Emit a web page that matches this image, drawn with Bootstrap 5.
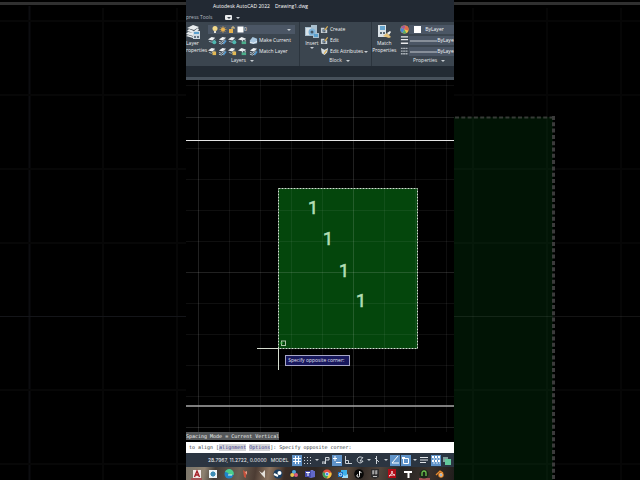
<!DOCTYPE html>
<html lang="en">
<head>
<meta charset="utf-8">
<meta name="viewport" content="width=device-width, initial-scale=1">
<title>Autodesk AutoCAD 2022 - Drawing1.dwg</title>
<link href="https://cdn.jsdelivr.net/npm/bootstrap@5.3.0/dist/css/bootstrap.min.css" rel="stylesheet">
<style>
body{background:#000;font:5px/8px "Open Sans",sans-serif;color:#f0f2f4}
.stage{display:grid;grid-template-columns:minmax(0,186fr) minmax(0,268fr) minmax(0,186fr);grid-template-rows:minmax(0,1fr)}
.backdrop,.drawing svg{display:block;width:100%;height:100%}
button,select{font:inherit;color:inherit;background:none;border:0;padding:0;margin:0}
.app{background:#222933}
.titlebar{height:13px;padding:2px 0 0 27px;gap:5px;line-height:8px;color:#fff}
.tabs{height:9px;color:#b4bac1;gap:13px}
.tabs button{line-height:9px}
.pill{width:7px;height:5px;background:#e8eaec;border-radius:1px}
.ribbon{height:44px;background:#3b454f}
.panel{border-right:1px solid #2c353e;min-width:0}
.panel-layers{flex:0 0 42.5%}
.panel-block{flex:0 0 27%}
.panel-body{height:34px;padding-top:2px}
.panel-name{height:9px;line-height:9px;color:#e2e6ea}
.panel-block .panel-name{padding-left:8px}
.panel-props .panel-name{padding-left:32px}
.big{width:16px;flex:none;display:flex;flex-direction:column;align-items:center;line-height:7px;white-space:nowrap}
.big svg{width:15px;height:15px;flex:none;margin-bottom:1px}
.big-start{width:22px;align-items:flex-start}
.line{height:11px;display:flex;align-items:center;white-space:nowrap}
.line button{display:flex;align-items:center;gap:1px;line-height:9px}
.tools-line{gap:2px}
.tools-line span{gap:1px}
.i9{width:9px;height:9px;flex:none}
.field{height:9px;background:#4b5665;min-width:0;line-height:9px}
.field select{appearance:none;line-height:9px;min-width:0;color:#f4f5f6}
.dn{display:inline-block;border:2px solid transparent;border-top-color:#c8cdd2;border-bottom:0;flex:none}
.pill .dn{border-top-color:#39424c}
.shelf{height:14px;background:#232b34;border-bottom:3px solid #47515b}
.drawing{background:#000;min-height:0}
.hint{position:absolute;left:37%;top:78%;width:65px;height:11px;border:1px solid #a6a6c4;background:#17175c;color:#e2e2f2;line-height:9px;padding-left:2px;white-space:nowrap}
.mono{font:5px/8px "DejaVu Sans Mono",monospace;white-space:pre}
.history{height:10px;background:#000}
.history span{background:#55585a;color:#f0f0f0;display:inline-block}
.prompt{height:11px;background:#fff;color:#33373b;line-height:11px;padding-left:3px}
.prompt button{background:#d5d6d9;color:#35358a;line-height:7px}
.status{height:14px;background:#2b3541;font:5px/14px Inter,sans-serif;color:#f0f2f4;padding-left:22px}
.status .tools{display:flex;align-items:center;justify-content:space-between;flex:1 1 0;min-width:0;padding:0 2px 0 3px}
.status .tools button{width:10px;height:11px;display:flex;align-items:center;justify-content:center}
.status .tools .more{width:5px}
.status .tools .lit{background:#5f93c9}
.taskbar{height:13px;padding:0 8px 0 5px;background:linear-gradient(100deg,#7a756a 0,#8d8170 7%,#423c37 11%,#6d6154 20%,#4c3c33 26%,#8c7460 31%,#3b2d26 37%,#2e2722 48%,#57483b 60%,#332b27 65%,#51453c 72%,#262423 80%,#3c332d 90%,#201d1c)}
.taskbar button{width:11px;height:13px;display:flex;align-items:center;justify-content:center}
.taskbar .on{box-shadow:inset 0 -2px #a25254}
.taskbar svg{width:10px;height:10px}
</style>
<script src="https://cdn.jsdelivr.net/npm/bootstrap@5.3.0/dist/js/bootstrap.bundle.min.js"></script>
</head>
<body>
<svg class="d-none" aria-hidden="true">
 <symbol id="lay1" viewBox="0 0 10 10"><path d="M0 4l4-3 4 1-3 3z" fill="#eef1f3"/><path d="M1 6l4 1 3-3" fill="none" stroke="#9fb2bf"/><circle cx="7" cy="7" r="2.2" fill="#4fb8b0"/></symbol>
 <symbol id="lay2" viewBox="0 0 10 10"><path d="M1 4l4-3 4 1-4 3z" fill="#eef1f3"/><path d="M1 6l3 1 4-3M1 8l3 1 4-3" fill="none" stroke="#c3d1da"/><path d="M6 9l3-4" stroke="#4d98d1" stroke-width="1.5"/></symbol>
 <symbol id="lay3" viewBox="0 0 10 10"><path d="M0 4l4-3 4 1-3 3z" fill="#eef1f3"/><path d="M1 6l3 1 4-3" fill="none" stroke="#9fb2bf"/><path d="M5 5h4v4H5z" fill="#e2b956"/></symbol>
 <symbol id="lay4" viewBox="0 0 10 10"><path d="M0 4l4-3 5 2-4 2z" fill="#eef1f3"/><path d="M4 6h5v3H4z" fill="#4cae8b"/><path d="M5 6V4h3v2" fill="none" stroke="#d4dde2"/></symbol>
 <symbol id="block" viewBox="0 0 10 10"><path d="M1 3h4v2H3v4H1zM3 8h5v1H3zM6 5h2v4H6z" fill="#c9d1d7"/><circle cx="4" cy="6" r="1.5" fill="#75899a"/><path d="M5 5l3-4 1 1-3 4z" fill="#ddb35b"/></symbol>
</svg>
<main class="stage vh-100 overflow-hidden">
 <svg class="backdrop" viewBox="0 0 186 480" preserveAspectRatio="xMidYMid slice" aria-hidden="true">
  <path d="M0 3.500H186" stroke="#303030" stroke-width="3"/>
  <path d="M29.500 6V480" stroke="#0c0d10" stroke-width="2"/>
  <path d="M103 8V480M177 8V480M0 21H186M0 95H186M0 169H186M0 243H186M0 390H186M0 464H186" stroke="#070707" stroke-width="2"/>
  <path d="M0 316.500H186" stroke="#141519"/>
 </svg>
 <div class="app d-flex flex-column overflow-hidden">
  <header class="titlebar d-flex"><span>Autodesk AutoCAD 2022</span><span>Drawing1.dwg</span></header>
  <nav class="tabs d-flex align-items-center" aria-label="Ribbon tabs">
   <button type="button">press Tools</button>
   <button type="button" class="d-flex align-items-center gap-1" aria-label="Ribbon display"><span class="pill d-flex align-items-center justify-content-center"><i class="dn"></i></span><i class="dn"></i></button>
  </nav>
  <section class="ribbon d-flex flex-shrink-0 overflow-hidden">
   <div class="panel panel-layers">
    <div class="panel-body d-flex">
     <button type="button" class="big big-start"><svg viewBox="0 0 15 15"><path d="M1 4l6-3 6 2-5 3zM1 7l7 2 5-3-1-2-4 3-5-2zM0 10l7 2 2-1V9L2 8zM0 12l7 2 1-1-6-2z" fill="#e9edef"/><path d="M7 7h7v8H7z" fill="#cfdae2"/><path d="M8 8h5v2H8z" fill="#5ba0cd"/><path d="M8 12h2v2H8zM11 12h2v2h-2z" fill="#657482"/></svg><span>Layer</span><span>roperties</span></button>
     <div class="flex-fill">
      <div class="line"><div class="field d-flex align-items-center flex-fill ps-1 pe-1 me-1">
        <svg viewBox="0 0 32 9" width="32" height="9"><circle cx="3" cy="3.500" r="2.500" fill="#f3d98a"/><path d="M2 6h2v2H2z" fill="#e0e0d8"/><circle cx="11" cy="4.500" r="2" fill="#e9b453"/><path d="M11 1v7M7.500 4.500h7M8.500 2l5 5M13.500 2l-5 5" stroke="#e9b453" stroke-width=".6"/><path d="M17 4h4v4h-4z" fill="#e6b24c"/><path d="M20 4V2h2v2" fill="none" stroke="#e9cb87"/><path d="M25.500 1.500h6v6h-6z" fill="#fff"/></svg>
        <select class="flex-fill" aria-label="Current layer"><option>0</option></select><i class="dn"></i></div></div>
      <div class="line tools-line"><span class="d-flex"><svg class="i9"><use href="#lay1"/></svg><svg class="i9"><use href="#lay2"/></svg><svg class="i9"><use href="#lay1"/></svg><svg class="i9"><use href="#lay4"/></svg></span><button type="button"><svg class="i9" viewBox="0 0 10 10"><path d="M1 5l3-4 5 2v5l-4 1-4-1z" fill="#a9c7df"/><path d="M1 7l4 1 4-2" fill="none" stroke="#eef1f3"/></svg>Make Current</button></div>
      <div class="line tools-line"><span class="d-flex"><svg class="i9"><use href="#lay3"/></svg><svg class="i9"><use href="#lay2"/></svg><svg class="i9"><use href="#lay3"/></svg><svg class="i9"><use href="#lay4"/></svg></span><button type="button"><svg class="i9"><use href="#lay2"/></svg>Match Layer</button></div>
     </div>
    </div>
    <div class="panel-name d-flex align-items-center justify-content-center gap-1"><span>Layers</span><i class="dn"></i></div>
   </div>
   <div class="panel panel-block">
    <div class="panel-body d-flex">
     <button type="button" class="big ms-1"><svg viewBox="0 0 15 15"><path d="M1 3h6V1h6v8h2v5H9v-2H1z" fill="#a9bfce"/><path d="M2 4h5v7H2z" fill="#d8e2e8"/><circle cx="8" cy="8" r="3.500" fill="#7fb4da"/><circle cx="8" cy="8" r="1.500" fill="#435767"/><path d="M10 10h4v3h-4z" fill="#5ba0cd"/></svg><span>Insert</span><i class="dn"></i></button>
     <div>
      <div class="line"><button type="button"><svg class="i9"><use href="#block"/></svg>Create</button></div>
      <div class="line"><button type="button"><svg class="i9"><use href="#block"/></svg>Edit</button></div>
      <div class="line"><button type="button"><svg class="i9" viewBox="0 0 10 10"><path d="M1 1l4 2 4-2-1 5-3 3-3-2z" fill="#d6dde1"/><path d="M4 7l3-4 1 1-3 4z" fill="#ddb35b"/></svg>Edit Attributes<i class="dn"></i></button></div>
     </div>
    </div>
    <div class="panel-name d-flex align-items-center justify-content-center gap-1"><span>Block</span><i class="dn"></i></div>
   </div>
   <div class="panel panel-props flex-fill border-0">
    <div class="panel-body d-flex">
     <button type="button" class="big ms-1 me-2"><svg viewBox="0 0 15 15"><path d="M1 1h8v12H1z" fill="#dbe3e8"/><path d="M3 2h5v4H3z" fill="#66a5cf"/><path d="M3 8h2v2H3zM6 8h2v2H6z" fill="#5c6c79"/><path d="M6 12l4-3 4 4-2 1z" fill="#e3c17a"/><path d="M10 9l3-2 1 1-2 3z" fill="#f0f0ec"/></svg><span>Match</span><span>Properties</span></button>
     <div class="flex-fill">
      <div class="line"><svg class="i9" viewBox="0 0 10 10"><circle cx="5" cy="5" r="4.500" fill="#eec54b"/><path d="M5 5L1 3A4.500 4.500 0 0 1 6 .6z" fill="#a6599c"/><path d="M5 5L6 .6A4.500 4.500 0 0 1 9.400 6z" fill="#e26c4a"/><path d="M5 5L1 3A4.500 4.500 0 0 0 3 9z" fill="#4c86cf"/><path d="M5 5L3 9a4.500 4.500 0 0 0 4 0z" fill="#53b06b"/></svg>
       <div class="field d-flex align-items-center flex-fill ps-1 gap-1"><svg width="8" height="8" viewBox="0 0 8 8"><path d="M1 0h7v7H1z" fill="#fff"/></svg><select aria-label="Object color"><option>ByLayer</option></select></div></div>
      <div class="line"><svg class="i9" viewBox="0 0 10 10"><path d="M1 1h8M1 4h8M1 8h8" stroke="#e8eaec" stroke-width="1.500"/></svg>
       <div class="field d-flex align-items-center flex-fill"><svg class="flex-shrink-0" width="28" height="9"><path d="M1 5H28" stroke="#e2e6ea" stroke-width=".8"/></svg><select aria-label="Lineweight"><option>ByLaye</option></select></div></div>
      <div class="line"><svg class="i9" viewBox="0 0 10 10"><path d="M1 1.500h8M1 4.500h8M1 7.500h8" stroke="#aeb5bb" stroke-width="1.500" stroke-dasharray="2 .5"/></svg>
       <div class="field d-flex align-items-center flex-fill"><svg class="flex-shrink-0" width="28" height="9"><path d="M1 5H28" stroke="#e2e6ea" stroke-width=".8"/></svg><select aria-label="Linetype"><option>ByLaye</option></select></div></div>
     </div>
    </div>
    <div class="panel-name d-flex align-items-center justify-content-center gap-1"><span>Properties</span><i class="dn"></i></div>
   </div>
  </section>
  <div class="shelf flex-shrink-0"></div>
  <section class="drawing flex-fill position-relative overflow-hidden" aria-label="Drawing area">
   <svg viewBox="186 80 268 352" preserveAspectRatio="xMidYMid slice">
    <rect x="278.500" y="188.500" width="139" height="160" fill="#04460c"/>
    <path d="M229.500 80V432M260.500 80V432M291.500 80V432M322.500 80V432M384.500 80V432M415.500 80V432M446.500 80V432M186 85.500H454M186 148.500H454M186 179.500H454M186 210.500H454M186 241.500H454M186 303.500H454M186 334.500H454M186 365.500H454M186 396.500H454" stroke="#fff" stroke-opacity=".06"/>
    <path d="M198.500 80V432M353.500 80V432M186 117.500H454M186 272.500H454M186 427.500H454" stroke="#fff" stroke-opacity=".13"/>
    <path d="M186 140.500H454" stroke="#e4e4e4"/><path d="M186 406H454" stroke="#a8a8a8" stroke-width="1.500"/>
    <rect x="278.500" y="188.500" width="139" height="160" fill="none" stroke="#d3e0d3" stroke-dasharray="2 1"/>
    <g font-family="Roboto, sans-serif" font-size="18" fill="#b5dcb5" stroke="#b5dcb5" stroke-width=".6"><text x="308" y="214">1</text><text x="323" y="245">1</text><text x="339" y="277">1</text><text x="356" y="307">1</text></g>
    <path d="M257 348.500H279M278.500 348V370" stroke="#d6ddd0"/>
    <rect x="281.500" y="341" width="4" height="4.500" fill="none" stroke="#a9c4a5"/><path d="M280 343h3" stroke="#3bb143"/>
   </svg>
   <div class="hint">Specify opposite corner:</div>
  </section>
  <footer class="flex-shrink-0 overflow-hidden">
   <div class="history mono"><span>Spacing Mode = Current Vertical</span></div>
   <div class="prompt mono">to align [<button type="button">alignment</button> <button type="button">Options</button>]: Specify opposite corner:</div>
   <div class="status d-flex"><span class="me-1">28.7967, 11.2722, 0.0000</span><span>MODEL</span>
    <div class="tools">
     <button type="button" class="lit" aria-label="Grid"><svg width="8" height="8"><path d="M2.500 0V8M5.500 0V8M0 2.500H8M0 5.500H8" stroke="#fff"/></svg></button>
     <button type="button" aria-label="Snap"><svg width="8" height="8"><path d="M0 1.500H8M0 4.500H8M0 7.500H8" stroke="#ccd2d8" stroke-dasharray="1 2"/></svg></button>
     <button type="button" class="more" aria-label="Snap settings"><i class="dn"></i></button>
     <button type="button" aria-label="Infer constraints"><svg width="8" height="8"><path d="M0 6h3v2H0zM3.500 8V1.500H7V4H4" fill="none" stroke="#ccd2d8"/></svg></button>
     <button type="button" class="lit" aria-label="Dynamic input"><svg width="8" height="8"><path d="M2 0v5M0 2.500h4M3 6.500h5" stroke="#fff"/></svg></button>
     <button type="button" aria-label="Ortho"><svg width="8" height="8"><path d="M1.500 0v7.500H8M1.500 4.500h3v3" fill="none" stroke="#ccd2d8"/></svg></button>
     <button type="button" aria-label="Polar tracking"><svg width="8" height="8"><path d="M6.500 2A3 3 0 1 0 7 5H4l3-4" fill="none" stroke="#ccd2d8"/></svg></button>
     <button type="button" class="more" aria-label="Polar settings"><i class="dn"></i></button>
     <button type="button" aria-label="Isodraft"><svg width="8" height="8"><path d="M3.500 0v8M2 2l4 4" stroke="#ccd2d8" fill="none"/></svg></button>
     <button type="button" class="more" aria-label="Isodraft settings"><i class="dn"></i></button>
     <button type="button" class="lit" aria-label="Snap tracking"><svg width="8" height="8"><path d="M7 0L1 7h7" stroke="#fff" fill="none"/></svg></button>
     <button type="button" class="lit" aria-label="Object snap"><svg width="8" height="8"><path d="M1.500 2.500h5v5h-5z" stroke="#fff" fill="none"/><path d="M0 1h3v2H0z" fill="#fff"/></svg></button>
     <button type="button" class="more" aria-label="Object snap settings"><i class="dn"></i></button>
     <button type="button" aria-label="Lineweight display"><svg width="8" height="8"><path d="M0 1.500h8M0 4h8M0 6.500h6" stroke="#dfe3e7"/></svg></button>
     <button type="button" class="lit" aria-label="Transparency"><svg width="8" height="8"><path d="M0 1h8M0 5h8" stroke="#fff" stroke-width="2" stroke-dasharray="2 1"/><path d="M1 3h7M1 7h7" stroke="#d9e7f4" stroke-dasharray="2 1"/></svg></button>
     <button type="button" aria-label="Selection cycling"><svg width="9" height="9"><path d="M1 1h5v5H1z" fill="#7f9c9a"/><path d="M3 3h6v6H3z" fill="#63c79b"/></svg></button>
    </div></div>
   <div class="taskbar d-flex justify-content-between">
    <button type="button" class="on" aria-label="AutoCAD"><svg viewBox="0 0 10 10"><path d="M1 1h8v8H1z" fill="#f2e9e9"/><path d="M2.500 8L5 2l2.500 6M3.500 6h3" stroke="#a51d25" stroke-width="1.400" fill="none"/></svg></button>
    <button type="button" aria-label="Snagit"><svg viewBox="0 0 10 10"><path d="M1 1h8v8H1z" fill="#eef5f8"/><path d="M3 3h4v4H3z" fill="#3c8db5"/><path d="M5 2v6M2 5h6" stroke="#3c8db5"/></svg></button>
    <button type="button" aria-label="Edge"><svg viewBox="0 0 10 10"><circle cx="5" cy="5" r="4.500" fill="#1f84c8"/><path d="M1 3a4.500 4.500 0 0 1 8.500 3H5c0-2-2-3-4-3z" fill="#4bcf8c"/><path d="M4 6h4" stroke="#dff2f5"/></svg></button>
    <button type="button" aria-label="SketchUp"><svg viewBox="0 0 10 10"><path d="M3 1l3 2v6L4 8z" fill="#c7523c"/><path d="M5 3l2-1v4z" fill="#e8a08d"/></svg></button>
    <button type="button" aria-label="Inventor"><svg viewBox="0 0 10 10"><path d="M2 2l3 2 3-3v8L5 6z" fill="#e5e1db"/></svg></button>
    <button type="button" aria-label="Steam"><svg viewBox="0 0 10 10"><circle cx="5" cy="5" r="4.500" fill="#1b3e61"/><circle cx="6.500" cy="4" r="2" fill="#fff"/><path d="M1 5l4 2" stroke="#fff" stroke-width="2"/></svg></button>
    <button type="button" aria-label="DaVinci Resolve"><svg viewBox="0 0 10 10"><circle cx="5" cy="5" r="4.500" fill="#262a35"/><circle cx="5" cy="3" r="2" fill="#53a8dd"/><circle cx="3.200" cy="6" r="2" fill="#e8c34e"/><circle cx="7" cy="6" r="2" fill="#dd5a79"/></svg></button>
    <button type="button" aria-label="Teams"><svg viewBox="0 0 10 10"><circle cx="7" cy="3" r="2" fill="#7b83eb"/><path d="M3 2h7v6L6 9 3 8z" fill="#6168c9"/><path d="M0 2h6v6H0z" fill="#474daf"/><path d="M1 3.500h4M3 3.500V7" stroke="#fff"/></svg></button>
    <button type="button" aria-label="Chrome"><svg viewBox="0 0 10 10"><circle cx="5" cy="5" r="4.500" fill="#e2503f"/><path d="M1 3a4.500 4.500 0 0 0 4 6.500L7 6z" fill="#3da55c"/><path d="M9.300 3.500A4.500 4.500 0 0 1 5 9.500L7 4z" fill="#f3c83e"/><circle cx="5" cy="5" r="2" fill="#fff"/><circle cx="5" cy="5" r="1.500" fill="#4a87e0"/></svg></button>
    <button type="button" aria-label="Outlook"><svg viewBox="0 0 10 10"><path d="M3 1h6v7H3z" fill="#40b2ea"/><path d="M4 5l3 2 3-2v4H4z" fill="#9fdcf6"/><path d="M0 3h5v5H0z" fill="#126ec2"/><circle cx="2.500" cy="5.500" r="1.300" fill="none" stroke="#fff" stroke-width=".8"/></svg></button>
    <button type="button" aria-label="TikTok"><svg viewBox="0 0 10 10"><circle cx="5" cy="5" r="4.800" fill="#080808"/><path d="M5.500 2v4.500A1.300 1.300 0 1 1 4 5.500M5.500 2.500l2 1.200" stroke="#fff" fill="none"/></svg></button>
    <button type="button" aria-label="Epic Games"><svg viewBox="0 0 10 10"><path d="M1 0h8v8L5 10 1 8z" fill="#2d2c2d"/><path d="M2.500 2h2M5.500 2h2M2.500 4h2M5.500 4h2M3 1.500v4M6 1.500v4M3 7.500h4" stroke="#e6e6e6" stroke-width=".8"/></svg></button>
    <button type="button" aria-label="Acrobat"><svg viewBox="0 0 10 10"><path d="M1 0h8v9H1z" fill="#b30c17"/><path d="M2 7c2-1 3-3 3-5 0 2 1 4 3 4-2 0-4 0-6 1z" stroke="#fff" stroke-width=".8" fill="none"/></svg></button>
    <button type="button" aria-label="Twinmotion"><svg viewBox="0 0 10 10"><path d="M1 3h8M5.500 3v6" stroke="#fff" stroke-width="2"/></svg></button>
    <button type="button" class="on" aria-label="Music"><svg viewBox="0 0 10 10"><circle cx="5" cy="5" r="4.500" fill="#1a261a"/><path d="M3 7V4a2 2 0 0 1 4 0v3" stroke="#6cc24e" fill="none" stroke-width="1.300"/></svg></button>
    <button type="button" aria-label="Blender"><svg viewBox="0 0 10 10"><path d="M1 6l4-4 3 2" stroke="#e78a2d" stroke-width="1.300" fill="none"/><circle cx="6" cy="6" r="2.700" fill="#e78a2d"/><circle cx="6" cy="6" r="1.400" fill="#fff"/><circle cx="6" cy="6" r=".8" fill="#265787"/></svg></button>
   </div>
  </footer>
 </div>
 <svg class="backdrop" viewBox="454 0 186 480" preserveAspectRatio="xMidYMid slice" aria-hidden="true">
  <path d="M454 3.500H640" stroke="#303030" stroke-width="3"/>
  <path d="M454 117H553V480H454z" fill="#011405"/>
  <path d="M473 8V480M547 8V480M621 8V480M454 21H640M454 95H640M454 169H640M454 243H640M454 390H640M454 464H640" stroke="#fff" stroke-opacity=".025" stroke-width="2"/>
  <path d="M454 316.500H640" stroke="#fff" stroke-opacity=".08"/>
  <path d="M455 117.500H555" stroke="#363b36" stroke-width="2" stroke-dasharray="4 2.300"/>
  <path d="M553.500 116V480" stroke="#3b3b3b" stroke-width="3" stroke-dasharray="4 2.300"/>
 </svg>
</main>
</body>
</html>
